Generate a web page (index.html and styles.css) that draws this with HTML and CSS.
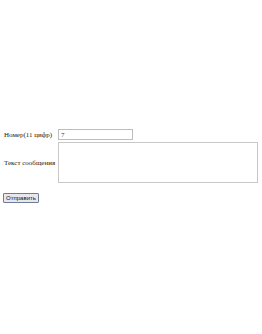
FILE: index.html
```html
<!DOCTYPE html>
<html lang="ru">
<head>
    <meta charset="UTF-8">
    <title>Отправка SMS</title>
    <link rel="stylesheet" href="styles.css">
</head>
<body>
    <form class="sms-form">
        <div class="form-grid">
            <label for="phone">Номер(11 цифр)</label>
            <input type="text" id="phone" name="phone" class="phone-input" value="7">
            <label for="message">Текст сообщения</label>
            <textarea id="message" name="message" class="message-input"></textarea>
        </div>
        <button type="submit" class="btn-send">Отправить</button>
    </form>
</body>
</html>
```

FILE: styles.css
```css
body {
    margin: 0;
    font-family: 'Liberation Serif', serif;
    font-size: 7px;
    color: #222;
    background: #fff;
}
.sms-form {
    padding: 129px 0 0 3px;
}
.form-grid {
    display: grid;
    grid-template-columns: 55px auto;
    row-gap: 2px;
    align-items: center;
}
.form-grid label {
    padding-left: 1px;
}
.phone-input {
    box-sizing: border-box;
    width: 75px;
    height: 11px;
    margin: 0;
    padding: 0 2px;
    border: 1px solid #bdbdbd;
    font-family: 'Liberation Serif', serif;
    font-size: 7px;
    color: #333;
}
.message-input {
    box-sizing: border-box;
    width: 200px;
    height: 41px;
    margin: 0;
    padding: 0 2px;
    border: 1px solid #c8c8c8;
    resize: none;
}
.btn-send {
    display: block;
    margin-top: 10px;
    box-sizing: border-box;
    width: 36px;
    height: 10px;
    padding: 0;
    border: 1px solid #6f7c99;
    border-radius: 1px;
    background: #e8e8ec;
    font-family: 'Liberation Sans', sans-serif;
    font-size: 6px;
    line-height: 8px;
    color: #111;
}
```
